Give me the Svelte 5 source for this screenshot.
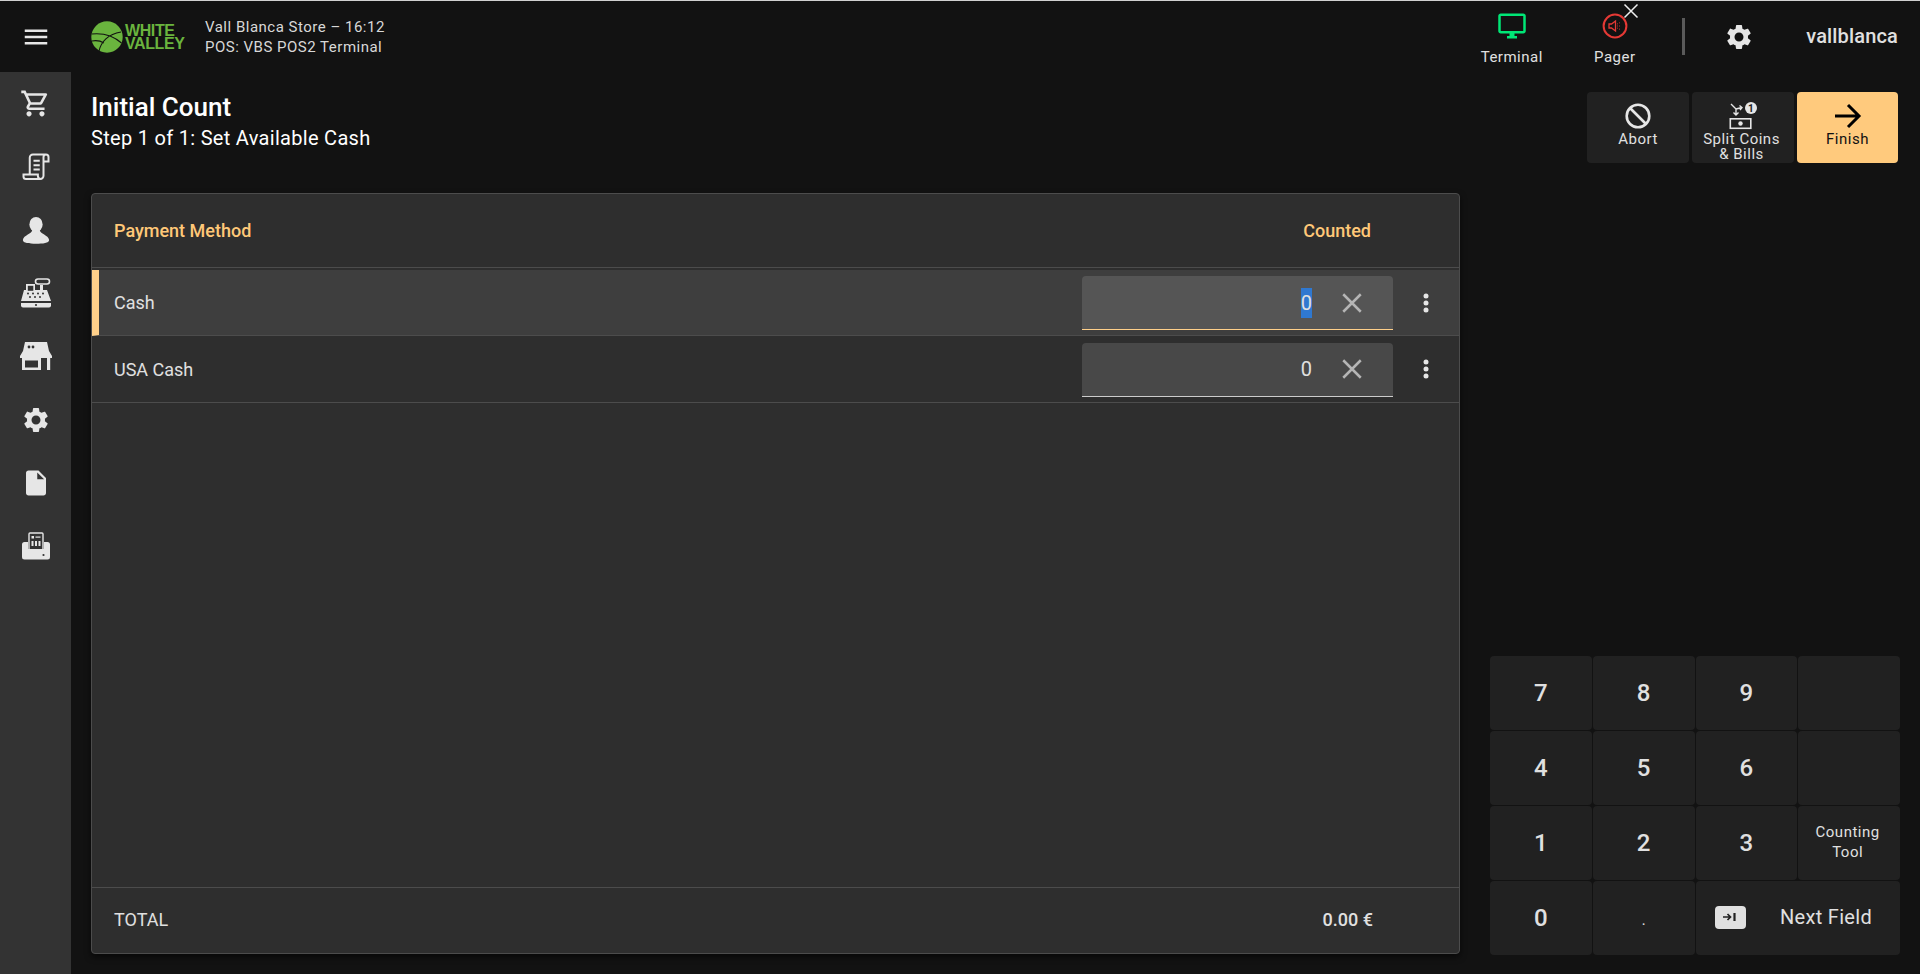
<script>
  // left rail icons, in order from the top
  const railIcons = ['cart', 'receipt', 'user', 'register', 'store', 'gear', 'file', 'fax'];

  const rows = [
    { name: 'Cash', value: '0', active: true },
    { name: 'USA Cash', value: '0', active: false }
  ];

  const gearPath =
    'M19.14 12.94c.04-.3.06-.61.06-.94 0-.32-.02-.64-.07-.94l2.03-1.58c.18-.14.23-.41.12-.61l-1.92-3.32c-.12-.22-.37-.29-.59-.22l-2.39.96c-.5-.38-1.03-.7-1.62-.94l-.36-2.54c-.04-.24-.24-.41-.48-.41h-3.84c-.24 0-.43.17-.47.41l-.36 2.54c-.59.24-1.13.57-1.62.94l-2.39-.96c-.22-.08-.47 0-.59.22L2.74 8.87c-.12.21-.08.47.12.61l2.03 1.58c-.05.3-.09.63-.09.94s.02.64.07.94l-2.03 1.58c-.18.14-.23.41-.12.61l1.92 3.32c.12.22.37.29.59.22l2.39-.96c.5.38 1.03.7 1.62.94l.36 2.54c.05.24.24.41.48.41h3.84c.24 0 .44-.17.47-.41l.36-2.54c.59-.24 1.13-.56 1.62-.94l2.39.96c.22.08.47 0 .59-.22l1.92-3.32c.12-.22.07-.47-.12-.61l-2.01-1.58zM12 15.6c-1.98 0-3.6-1.62-3.6-3.6s1.62-3.6 3.6-3.6 3.6 1.62 3.6 3.6-1.62 3.6-3.6 3.6z';
</script>

<div class="page">
  <header class="topbar">
    <div class="burger">
      <svg width="30" height="30" viewBox="0 0 24 24" fill="#e6e6e6"><path d="M3 18h18v-2H3v2zm0-5h18v-2H3v2zm0-7v2h18V6H3z" /></svg>
    </div>
    <div class="logo">
      <svg width="32" height="32" viewBox="0 0 32 32">
        <circle cx="16" cy="16" r="15.7" fill="#6ab43e" />
        <path d="M.5 13c9-1 21 1 30 9M8 30c2-9 9-17 22-19M.8 20c5-1 9 0 12 2" fill="none" stroke="#111" stroke-width="1.1" />
      </svg>
      <div class="logo-text">WHITE<br />VALLEY</div>
    </div>
    <div class="store">
      <div>Vall Blanca Store – 16:12</div>
      <div>POS: VBS POS2 Terminal</div>
    </div>
    <div class="top-right">
      <div class="status">
        <svg width="30" height="30" viewBox="0 0 24 24" fill="#00e676"><path d="M21 2H3c-1.1 0-2 .9-2 2v12c0 1.1.9 2 2 2h7v2H8v2h8v-2h-2v-2h7c1.1 0 2-.9 2-2V4c0-1.1-.9-2-2-2zm0 14H3V4h18v12z" /></svg>
        <span>Terminal</span>
      </div>
      <div class="status">
        <svg width="30" height="30" viewBox="2 2 30 30" fill="none" stroke="#e53935">
          <circle cx="17" cy="17" r="11.400" stroke-width="2" />
          <path d="M11 15h2.500l4-3v10l-4-3H11z" stroke-width="1.300" />
          <path d="M19.500 14.500v.8M19.500 16.600v.8M19.500 18.700v.8M21.500 13.500v.8M21.500 16.600v.8M21.500 19.700v.8" stroke-width="1" />
        </svg>
        <span>Pager</span>
        <svg class="pager-x" width="16" height="16" viewBox="0 0 16 16" stroke="#eee" stroke-width="1.500"><path d="M1.500 1.500l13 13M14.500 1.500l-13 13" /></svg>
      </div>
      <div class="divider"></div>
      <svg class="top-gear" width="30" height="30" viewBox="0 0 24 24" fill="#e6e6e6"><path d={gearPath} /></svg>
      <div class="user">vallblanca</div>
    </div>
  </header>

  <div class="body">
    <nav class="rail">
      {#each railIcons as icon}
        <div class="rail-item">
          {#if icon === 'cart'}
            <svg width="31" height="31" viewBox="0 0 24 24" fill="#e6e6e6"><path d="M15.55 13c.75 0 1.41-.41 1.75-1.03l3.58-6.49A.996.996 0 0 0 20.01 4H5.21l-.94-2H1v2h2l3.6 7.59-1.35 2.44C4.52 15.37 5.48 17 7 17h12v-2H7l1.1-2h7.45zM6.16 6h12.15l-2.76 5H8.53L6.16 6zM7 18c-1.1 0-1.99.9-1.99 2S5.9 22 7 22s2-.9 2-2-.9-2-2-2zm10 0c-1.1 0-1.99.9-1.99 2s.89 2 1.99 2 2-.9 2-2-.9-2-2-2z" /></svg>
          {:else if icon === 'receipt'}
            <svg width="30" height="30" viewBox="0 0 24 24" fill="none" stroke="#e6e6e6" stroke-width="1.600"><path d="M7 18V4.500A2.500 2.500 0 0 1 9.500 2H20a2 2 0 0 1 2 2v3.500h-4M20 2a2 2 0 0 0-2 2v15a2.500 2.500 0 0 1-2.500 2.500H4a2 2 0 0 1-2-2V18h11.500v1a2.500 2.500 0 0 0 2 2.500M10 7h5M10 10.500h5M10 14h5" /></svg>
          {:else if icon === 'user'}
            <svg width="30" height="30" viewBox="0 0 24 24" fill="#e6e6e6"><ellipse cx="12" cy="7.500" rx="5.300" ry="6" /><path d="M9 12c0 3-7 4-7.500 8 0 2.500 5 3 10.500 3s10.500-.5 10.500-3c-.5-4-7.500-5-7.500-8z" /></svg>
          {:else if icon === 'register'}
            <svg width="30" height="30" viewBox="0 0 30 30">
              <path d="M17 1h9a1.500 1.500 0 0 1 0 5h-9a1.500 1.500 0 0 1 0-5z" fill="none" stroke="#e6e6e6" stroke-width="1.600" />
              <path d="M5 6h9v6h5V7h3v5h4l4 11H0l3-11h2z" fill="#e6e6e6" />
              <rect x="6.800" y="7.800" width="5.500" height="5" fill="#333" />
              <g fill="#333"><circle cx="7" cy="15.500" r="1" /><circle cx="12" cy="15.500" r="1" /><circle cx="17" cy="15.500" r="1" /><circle cx="22" cy="15.500" r="1" /><circle cx="9" cy="19" r="1" /><circle cx="14" cy="19" r="1" /><circle cx="19" cy="19" r="1" /></g>
              <path d="M0 25h30v2.500a2 2 0 0 1-2 2H2a2 2 0 0 1-2-2z" fill="#e6e6e6" />
              <circle cx="15" cy="27" r="1.100" fill="#333" />
            </svg>
          {:else if icon === 'store'}
            <svg width="32" height="30" viewBox="0 0 32 30" fill="#e6e6e6">
              <path d="M5 1h22l2 9 3 5v2H0v-2l3-5z" />
              <circle cx="9" cy="6" r="1.400" fill="#333" /><circle cx="13" cy="6" r="1.400" fill="#333" />
              <path fill-rule="evenodd" d="M2 17h19v12H2zM5 19.500V26.500h13V19.500z" />
              <rect x="27" y="17" width="3.200" height="12" />
            </svg>
          {:else if icon === 'gear'}
            <svg width="30" height="30" viewBox="0 0 24 24" fill="#e6e6e6"><path d={gearPath} /></svg>
          {:else if icon === 'file'}
            <svg width="30" height="30" viewBox="0 0 24 24" fill="#e6e6e6"><path d="M6 2c-1.100 0-1.990.9-1.990 2L4 20c0 1.100.89 2 1.990 2H18c1.100 0 2-.9 2-2V8l-6-6H6zm7 7V3.500L18.500 9H13z" /></svg>
          {:else}
            <svg width="28" height="28" viewBox="0 0 28 28" fill="#e6e6e6">
              <path d="M2.500 10H6v7h16v-7h3.500A2.500 2.500 0 0 1 28 12.500V25a2.500 2.500 0 0 1-2.500 2.500h-23A2.500 2.500 0 0 1 0 25V12.500A2.500 2.500 0 0 1 2.500 10z" />
              <rect x="7" y="1" width="14" height="17" rx="1" fill="none" stroke="#e6e6e6" stroke-width="1.400" />
              <rect x="9.500" y="4" width="2.500" height="2.500" /><rect x="13.500" y="4.500" width="5" height="1.200" />
              <rect x="9.500" y="9" width="2" height="5" /><rect x="13" y="9" width="2" height="5" /><rect x="16.500" y="9" width="2" height="5" />
              <circle cx="21.500" cy="23" r="1.100" fill="#333" />
            </svg>
          {/if}
        </div>
      {/each}
    </nav>

    <main class="content">
      <div class="title">
        <h1>Initial Count</h1>
        <p>Step 1 of 1: Set Available Cash</p>
      </div>

      <section class="panel">
        <div class="panel-head">
          <span>Payment Method</span>
          <span class="counted">Counted</span>
        </div>
        {#each rows as row}
          <div class="row" class:active={row.active}>
            <span class="row-name">{row.name}</span>
            <div class="field">
              <span class="field-value"><span class="val">{row.value}</span></span>
              <svg width="30" height="30" viewBox="0 0 24 24" stroke="#b5b5b5" stroke-width="2"><path d="M5 5l14 14M19 5L5 19" /></svg>
            </div>
            <svg class="dots" width="6" height="20" viewBox="0 0 6 20" fill="#e6e6e6"><circle cx="3" cy="3" r="2.500" /><circle cx="3" cy="10" r="2.500" /><circle cx="3" cy="17" r="2.500" /></svg>
          </div>
        {/each}
        <div class="spacer"></div>
        <div class="panel-foot">
          <span>TOTAL</span>
          <span class="total">0.00 €</span>
        </div>
      </section>
    </main>

    <aside class="side">
      <div class="actions">
        <button class="action">
          <svg width="30" height="30" viewBox="0 0 30 30" fill="none" stroke="#e6e6e6" stroke-width="2.600"><circle cx="15" cy="15" r="11.300" /><path d="M7 7l16 16" /></svg>
          <span>Abort</span>
        </button>
        <button class="action split">
          <svg width="30" height="30" viewBox="0 0 30 30">
            <path d="M4 3l5 5v6M9 8l6-1.500M12.500 4.500l2.500 2-2 2.500M6.500 11.500l2.500 2.500 2.500-2.500" fill="none" stroke="#e6e6e6" stroke-width="1.400" />
            <circle cx="24" cy="7" r="6" fill="#e6e6e6" />
            <text x="24" y="10.500" text-anchor="middle" font-size="10" font-weight="700" font-family="Roboto" fill="#212121">1</text>
            <rect x="3.300" y="17.800" width="20.500" height="9.500" fill="none" stroke="#e6e6e6" stroke-width="1.600" />
            <circle cx="13.500" cy="22.500" r="2.200" fill="#e6e6e6" />
          </svg>
          <span>Split Coins<br />&amp; Bills</span>
        </button>
        <button class="action finish">
          <svg width="30" height="30" viewBox="0 0 30 30" fill="none" stroke="#000" stroke-width="3"><path d="M2 15h24M15 4l11 11-11 11" /></svg>
          <span>Finish</span>
        </button>
      </div>

      <div class="keypad">
        {#each ['7', '8', '9', '', '4', '5', '6', ''] as k}
          <button class="key">{k}</button>
        {/each}
        <button class="key">1</button>
        <button class="key">2</button>
        <button class="key">3</button>
        <button class="key tool">Counting<br />Tool</button>
        <button class="key">0</button>
        <button class="key dot"><span>.</span></button>
        <button class="key next">
          <span class="tab-badge">
            <svg width="14" height="10" viewBox="0 0 14 10" fill="none" stroke="#222" stroke-width="1.700"><path d="M0 5h7M4.500 2l3 3-3 3" /><path d="M11.500 1v8" stroke-width="2.200" /></svg>
          </span>
          <span>Next Field</span>
        </button>
      </div>
    </aside>
  </div>
</div>

<style>
  :global(body) {
    background: #121212;
  }

  .page {
    height: 974px;
    display: flex;
    flex-direction: column;
    background: #121212;
    color: #e0e0e0;
    font-family: Roboto, 'Liberation Sans', sans-serif;
    overflow: hidden;
  }

  .topbar {
    height: 71px;
    flex: none;
    display: flex;
    align-items: center;
    border-top: 1px solid #d0d0d0;
  }

  .burger {
    width: 72px;
    display: flex;
    justify-content: center;
  }

  .logo {
    display: flex;
    align-items: center;
    gap: 2px;
    margin-left: 19px;
    width: 114px;
  }

  .logo-text {
    font-family: 'Liberation Sans', sans-serif;
    font-weight: 700;
    font-size: 16px;
    line-height: 13px;
    letter-spacing: -0.4px;
    color: #6ab43e;
  }

  .store {
    font-size: 15px;
    line-height: 20px;
    letter-spacing: 0.5px;
    color: #d8d8d8;
  }

  .top-right {
    margin-left: auto;
    display: flex;
    align-items: center;
    padding-right: 22px;
  }

  .status {
    position: relative;
    width: 103px;
    display: flex;
    flex-direction: column;
    align-items: center;
    font-size: 15px;
    letter-spacing: 0.5px;
    line-height: 16px;
    margin-top: 2px;
  }

  .status span {
    margin-top: 8px;
  }

  .pager-x {
    position: absolute;
    left: 60px;
    top: -8px;
  }

  .divider {
    width: 3px;
    height: 37px;
    background: #5a5a5a;
    margin-left: 16px;
  }

  .top-gear {
    margin-left: 39px;
  }

  .user {
    margin-left: 52px;
    font-size: 20px;
    font-weight: 500;
    letter-spacing: 0.15px;
    padding-bottom: 1px;
  }

  .body {
    flex: 1;
    display: flex;
    min-height: 0;
  }

  .rail {
    width: 71px;
    flex: none;
    background: #333;
  }

  .rail-item {
    height: 63.200px;
    display: flex;
    align-items: center;
    justify-content: center;
  }

  .content {
    width: 1369px;
    margin-left: 20px;
    flex: none;
    display: flex;
    flex-direction: column;
    padding-bottom: 20px;
  }

  .title {
    height: 121px;
    flex: none;
    padding-top: 20px;
    box-sizing: border-box;
  }

  h1 {
    margin: 0;
    font-size: 26px;
    line-height: 30px;
    font-weight: 500;
    color: #fff;
  }

  .title p {
    margin: 0;
    font-size: 20px;
    line-height: 32px;
    letter-spacing: 0.3px;
    color: #fff;
  }

  .panel {
    flex: 1;
    display: flex;
    flex-direction: column;
    background: #2e2e2e;
    border: 1px solid #4c4c4c;
    border-radius: 4px;
    box-shadow: 0 3px 6px rgba(0, 0, 0, 0.6);
    font-size: 18px;
  }

  .panel-head {
    height: 74px;
    flex: none;
    display: flex;
    align-items: center;
    justify-content: space-between;
    padding: 0 88px 0 22px;
    box-sizing: border-box;
    border-bottom: 1px solid #4c4c4c;
    margin-bottom: 2px;
    color: #ffc878;
    font-weight: 500;
  }

  .row {
    height: 67px;
    flex: none;
    display: flex;
    align-items: center;
    box-sizing: border-box;
    padding: 0 30px 0 22px;
    border-bottom: 1px solid #4c4c4c;
  }

  .row.active {
    height: 66px;
    background: #3e3e3e;
    border-left: 7px solid #ffd08a;
    padding-left: 15px;
  }

  .row-name {
    flex: 1;
  }

  .field {
    width: 311px;
    height: 54px;
    margin-top: 1px;
    display: flex;
    align-items: center;
    justify-content: flex-end;
    gap: 25px;
    padding-right: 26px;
    box-sizing: border-box;
    background: #484848;
    border-bottom: 1px solid #ccc;
    border-radius: 4px 4px 0 0;
  }

  .active .field {
    background: #555;
    border-bottom-color: #ffd08a;
  }

  .active .val {
    background: #2f78d0;
    display: inline-block;
    line-height: 30px;
  }

  .field-value {
    font-size: 20px;
  }

  .dots {
    margin-left: 30px;
  }

  .spacer {
    flex: 1;
  }

  .panel-foot {
    height: 66px;
    flex: none;
    display: flex;
    align-items: center;
    justify-content: space-between;
    padding: 0 86px 2px 22px;
    box-sizing: border-box;
    border-top: 1px solid #4c4c4c;
  }

  .total {
    font-weight: 500;
  }

  .side {
    flex: 1;
    display: flex;
    flex-direction: column;
    justify-content: space-between;
    padding: 20px 20px 19px 30px;
  }

  button {
    font-family: inherit;
    color: inherit;
    border: none;
    padding: 0;
    background: #212121;
    border-radius: 4px;
  }

  .actions {
    display: flex;
    justify-content: flex-end;
    gap: 3px;
    padding-right: 2px;
  }

  .action {
    width: 102px;
    height: 71px;
    display: flex;
    flex-direction: column;
    align-items: center;
    padding-top: 9px;
    box-sizing: border-box;
    font-size: 15px;
    line-height: 15px;
    letter-spacing: 0.5px;
  }

  .action span {
    margin-top: 1px;
  }

  .split {
    padding-right: 3px;
  }

  .finish {
    width: 101px;
    background: #ffca7d;
    color: #111;
  }

  .keypad {
    display: grid;
    grid-template-columns: repeat(4, 1fr);
    grid-auto-rows: 74px;
    gap: 1px;
  }

  .key {
    font-size: 24px;
    font-weight: 500;
  }

  .tool {
    font-size: 15px;
    font-weight: 400;
    line-height: 20px;
    letter-spacing: 0.5px;
    padding-bottom: 2px;
    padding-right: 3px;
  }

  .dot {
    font-size: 12px;
  }

  .dot span {
    position: relative;
    top: 3px;
  }

  .next {
    grid-column: span 2;
    display: flex;
    align-items: center;
    justify-content: space-between;
    padding: 0 28px 2px 19px;
    font-size: 20px;
    font-weight: 400;
    letter-spacing: 0.3px;
  }

  .tab-badge {
    width: 31px;
    height: 23px;
    display: flex;
    align-items: center;
    justify-content: center;
    background: #e0e0e0;
    border-radius: 4px;
  }
</style>
